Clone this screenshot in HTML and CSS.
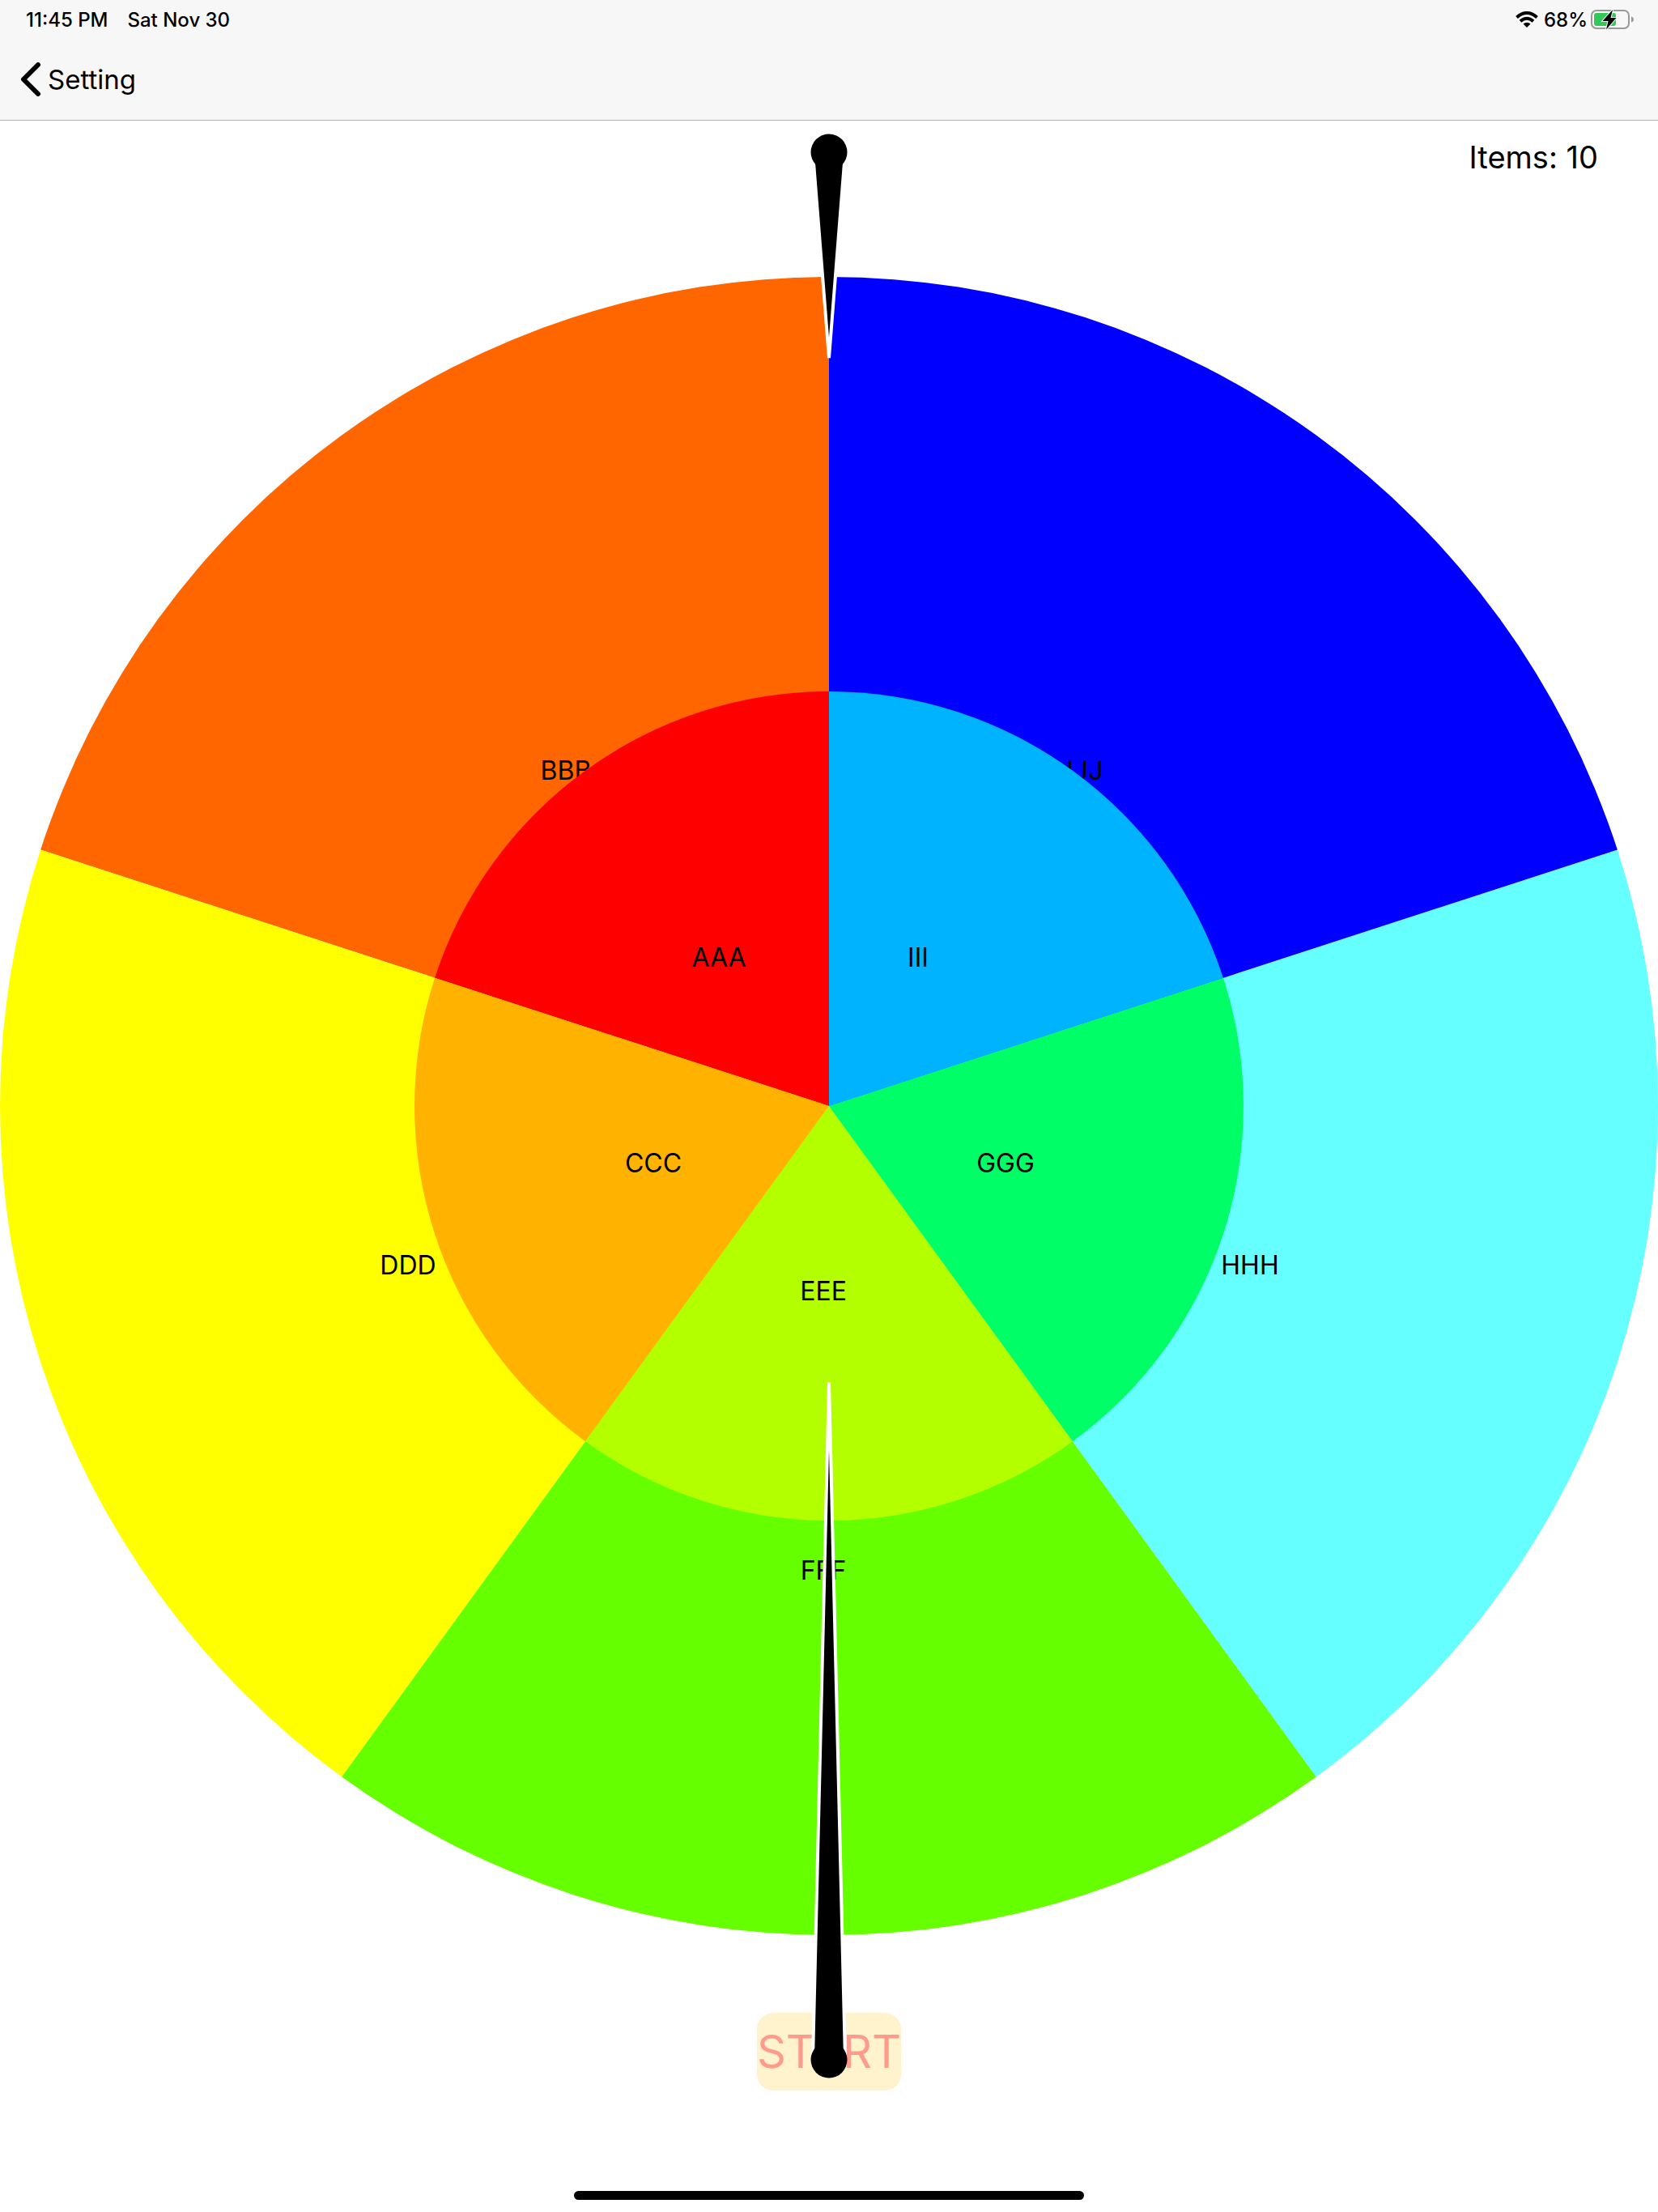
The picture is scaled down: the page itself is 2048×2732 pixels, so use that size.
FILE: index.html
```html
<!DOCTYPE html>
<html lang="en">
<head>
<meta charset="utf-8">
<meta name="viewport" content="width=device-width, initial-scale=1">
<title>Roulette</title>
<link rel="stylesheet" href="styles.css">
</head>
<body>
<header class="top">
  <div class="status">
    <div class="status-left">
      <span>11:45 PM</span>
      <span>Sat Nov 30</span>
    </div>
    <div class="status-right">
      <svg class="wifi" viewBox="0 0 28 20" aria-label="Wi-Fi">
        <g fill="none" stroke="#000" stroke-width="4">
          <path d="M1.500 7.500Q14 -3.500 26.500 7.500"/>
          <path d="M6 12.300Q14 5.200 22 12.300"/>
        </g>
        <path d="M14 20l-4.500-4.500q4.500-3.500 9 0z"/>
      </svg>
      <span class="percent">68%</span>
      <svg class="battery" viewBox="0 0 54 26" aria-label="Charging">
        <rect x="1" y="2" width="46" height="22" rx="6" fill="none" stroke="#999" stroke-width="2"/>
        <path d="M50 9.500q3 1 3 3.500t-3 3.500z" fill="#999"/>
        <rect x="4" y="5" width="27" height="16" rx="3" fill="#34c759"/>
        <path d="M27 1L14.500 15h7L19 25.500L31.500 11h-7z" fill="#000" stroke="#f7f7f7" stroke-width="2" paint-order="stroke"/>
      </svg>
    </div>
  </div>
  <nav class="nav">
    <a class="back" href="#setting">
      <svg class="chevron" viewBox="0 0 26 42" aria-hidden="true"><path d="M22 3L4 21L22 39" fill="none" stroke="#000" stroke-width="6" stroke-linecap="round" stroke-linejoin="round"/></svg>
      <span>Setting</span>
    </a>
  </nav>
</header>
<main class="stage">
  <p class="count">Items: 10</p>
  <div class="board">
    <svg class="wheel" viewBox="-1024 -1024 2048 2048" role="img" aria-label="Wheel">
      <g class="outer">
        <path fill="#ff6600" d="M0 0V-1024A1024 1024 0 0 0 -973.880 -316.430z"/>
        <path fill="#ffff00" d="M0 0L-973.880 -316.430A1024 1024 0 0 0 -601.890 828.430z"/>
        <path fill="#66ff00" d="M0 0L-601.890 828.430A1024 1024 0 0 0 601.890 828.430z"/>
        <path fill="#66ffff" d="M0 0L601.890 828.430A1024 1024 0 0 0 973.880 -316.430z"/>
        <path fill="#0000ff" d="M0 0L973.880 -316.430A1024 1024 0 0 0 0 -1024z"/>
      </g>
      <g class="label">
        <text x="-325" y="-403">BBB</text>
        <text x="-520" y="208">DDD</text>
        <text x="-7" y="585">FFF</text>
        <text x="520" y="208">HHH</text>
        <text x="311" y="-403">JJJ</text>
      </g>
      <g class="inner">
        <path fill="#ff0000" d="M0 0V-512A512 512 0 0 0 -486.940 -158.220z"/>
        <path fill="#ffb300" d="M0 0L-486.940 -158.220A512 512 0 0 0 -300.950 414.220z"/>
        <path fill="#b3ff00" d="M0 0L-300.950 414.220A512 512 0 0 0 300.950 414.220z"/>
        <path fill="#00ff66" d="M0 0L300.950 414.220A512 512 0 0 0 486.940 -158.220z"/>
        <path fill="#00b3ff" d="M0 0L486.940 -158.220A512 512 0 0 0 0 -512z"/>
      </g>
      <g class="label">
        <text x="-136" y="-172">AAA</text>
        <text x="-217" y="82">CCC</text>
        <text x="-7" y="240">EEE</text>
        <text x="218" y="82">GGG</text>
        <text x="110" y="-172">III</text>
      </g>
    </svg>
    <svg class="hands" viewBox="-1024 -1024 2048 2048" aria-hidden="true">
      <g stroke="#fff" stroke-width="4" stroke-linejoin="bevel">
        <path d="M-20 -1178H20L0 -924z"/>
        <path d="M-20 1178H20L0 341z"/>
      </g>
      <circle cy="-1178" r="22.500"/>
      <circle cy="1178" r="22.500"/>
    </svg>
  </div>
  <button class="start" type="button">START</button>
  <div class="home"></div>
</main>
</body>
</html>
```
FILE: styles.css
```css
* {
  box-sizing: border-box;
}

body {
  margin: 0;
  min-height: 100vh;
  display: flex;
  flex-direction: column;
  background: #fff;
  color: #000;
  font-family: Inter, Roboto, sans-serif;
  overflow-x: hidden;
}

.top {
  background: #f7f7f7;
  border-bottom: 1px solid #b2b2b2;
}

.status {
  display: flex;
  justify-content: space-between;
  align-items: center;
  height: 48px;
  padding: 0 29px 0 32px;
  font-size: 24px;
  font-weight: 500;
}

.status-left {
  display: flex;
  gap: 24px;
}

.status-right {
  display: flex;
  align-items: center;
}

.wifi {
  width: 28px;
  height: 20px;
}

.percent {
  margin: 0 4px 0 7px;
}

.battery {
  width: 54px;
  height: 26px;
}

.nav {
  display: flex;
  align-items: center;
  height: 100px;
  padding: 0 25px;
}

.back {
  display: flex;
  align-items: center;
  gap: 8px;
  color: inherit;
  font-size: 33px;
  text-decoration: none;
}

.chevron {
  width: 26px;
  height: 42px;
}

.stage {
  flex: 1;
  display: flex;
  flex-direction: column;
  align-items: center;
}

.count {
  align-self: flex-end;
  margin: 0;
  padding: 21px 74px 124px 0;
  font-size: 38px;
  line-height: 48px;
}

.board {
  position: relative;
  width: 100%;
}

.wheel {
  display: block;
  width: 100%;
  height: auto;
}

.label {
  font-size: 32px;
  text-anchor: middle;
}

.hands {
  position: absolute;
  inset: 0;
  z-index: 1;
  width: 100%;
  height: 100%;
  overflow: visible;
  pointer-events: none;
}

.start {
  width: 178px;
  height: 96px;
  margin: 96px 0 0;
  padding: 0;
  display: flex;
  justify-content: center;
  align-items: center;
  border: 0;
  border-radius: 20px;
  background: #fff3cd;
  color: #ff9b8c;
  font-family: inherit;
  font-size: 56px;
}

.home {
  width: 630px;
  height: 11px;
  margin: auto 0 15px;
  border-radius: 6px;
  background: #000;
}
```
